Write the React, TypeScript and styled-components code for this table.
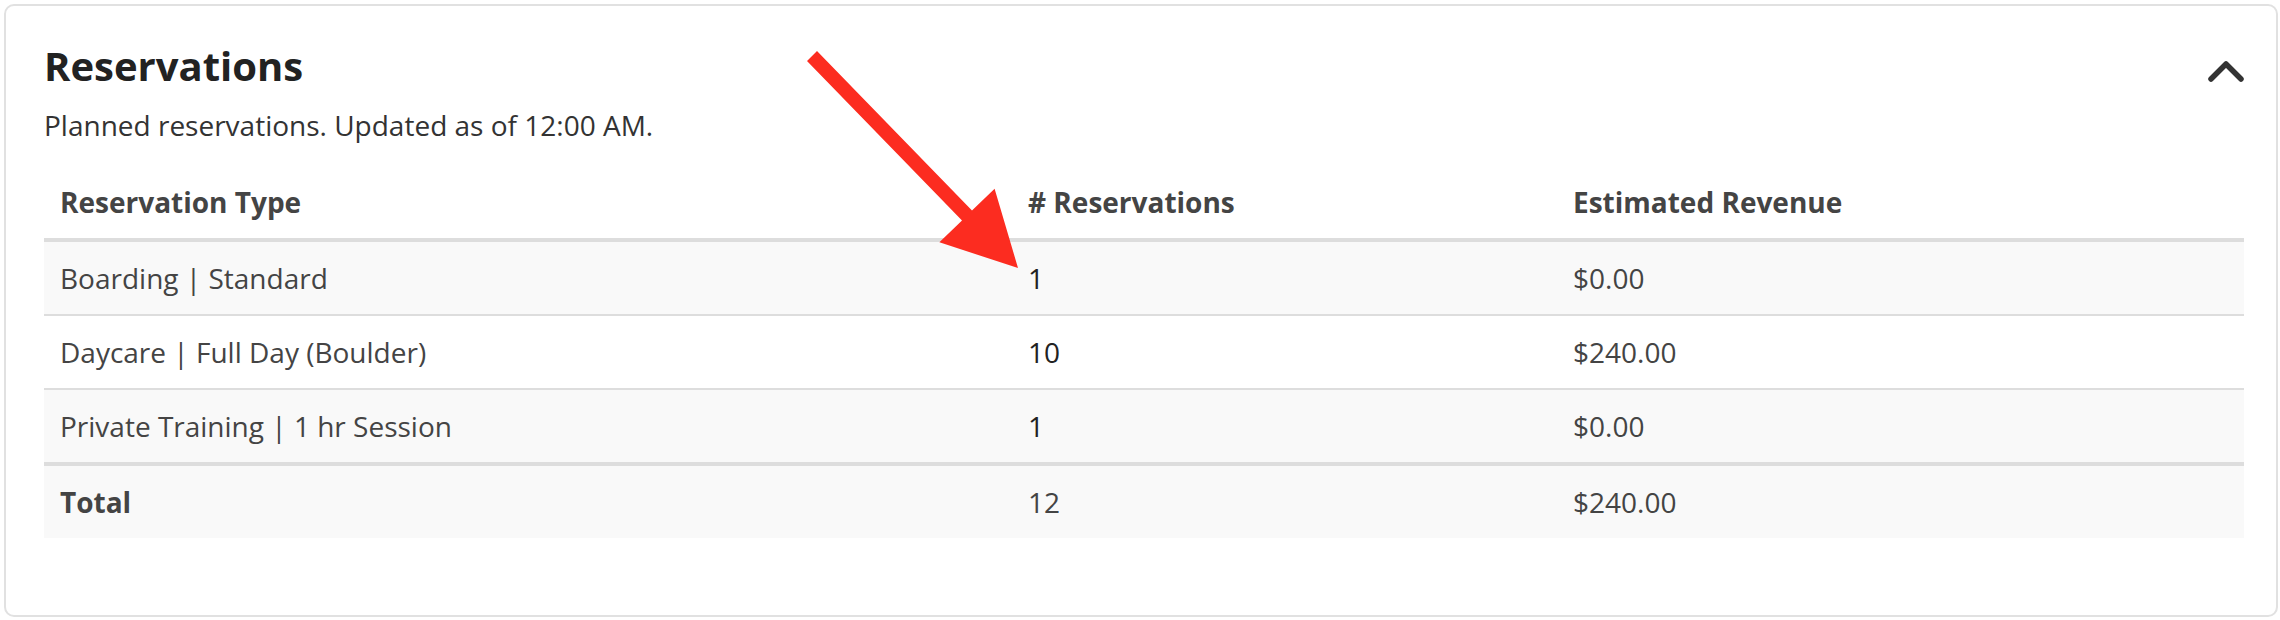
import React from "react";
import styled, { createGlobalStyle } from "styled-components";

const GlobalStyle = createGlobalStyle`
  html, body {
    margin: 0;
    padding: 0;
    background: #ffffff;
    font-family: "Open Sans", "Noto Sans", Arial, sans-serif;
  }
  * { box-sizing: border-box; }
`;

const Page = styled.div`
  position: relative;
  padding: 4px 2px 0 4px;
  width: 2280px;
  height: 620px;
`;

const Card = styled.section`
  border: 2px solid #e1e1e1;
  border-radius: 10px;
  background: #fff;
  padding: 38px 32px 77px 38px;
`;

const TitleRow = styled.div`
  display: flex;
  justify-content: space-between;
  align-items: flex-start;
`;

const Title = styled.h2`
  margin: 0;
  font-size: 40px;
  line-height: 44px;
  font-weight: 700;
  color: #222;
`;

const Toggle = styled.button`
  border: 0;
  background: none;
  padding: 0;
  margin-top: 15px;
  width: 36px;
  height: 24px;
  display: flex;
  cursor: pointer;
`;

const Subtitle = styled.p`
  margin: 17px 0 0 0;
  font-size: 28px;
  line-height: 40px;
  color: #333;
`;

const Table = styled.table`
  margin-top: 21px;
  width: 100%;
  table-layout: fixed;
  border-collapse: separate;
  border-spacing: 0;
  font-size: 28px;
  line-height: 40px;
`;

const Th = styled.th<{ $w: number }>`
  width: ${(p) => p.$w}px;
  text-align: left;
  font-weight: 700;
  color: #444;
  padding: 16px;
  border-bottom: 4px solid #dddddd;
  vertical-align: bottom;
`;

const Tr = styled.tr<{ $striped?: boolean; $total?: boolean }>`
  background: ${(p) => (p.$striped || p.$total ? "#f9f9f9" : "#ffffff")};
`;

const Td = styled.td<{ $bold?: boolean; $dark?: boolean; $border: "thin" | "thick" | "none" }>`
  padding: 16px;
  color: ${(p) => (p.$dark ? "#222" : "#444")};
  font-weight: ${(p) => (p.$bold ? 700 : 400)};
  border-bottom: ${(p) =>
    p.$border === "thick" ? "4px solid #dddddd" : p.$border === "thin" ? "2px solid #dddddd" : "0"};
`;

const Annotation = styled.svg`
  position: absolute;
  left: 0;
  top: 0;
  width: 2280px;
  height: 620px;
  pointer-events: none;
`;

const rows = [
  { type: "Boarding | Standard", count: "1", revenue: "$0.00" },
  { type: "Daycare | Full Day (Boulder)", count: "10", revenue: "$240.00" },
  { type: "Private Training | 1 hr Session", count: "1", revenue: "$0.00" },
];

export default function App() {
  return (
    <>
      <GlobalStyle />
      <Page>
        <Card>
          <TitleRow>
            <Title>Reservations</Title>
            <Toggle aria-label="Collapse">
              <svg width="36" height="24" viewBox="0 0 36 24">
                <polyline
                  points="3,20 18,5 33,20"
                  fill="none"
                  stroke="#333"
                  strokeWidth="5.5"
                  strokeLinecap="round"
                  strokeLinejoin="round"
                />
              </svg>
            </Toggle>
          </TitleRow>
          <Subtitle>Planned reservations. Updated as of 12:00 AM.</Subtitle>
          <Table>
            <thead>
              <tr>
                <Th $w={968}>Reservation Type</Th>
                <Th $w={545}># Reservations</Th>
                <Th $w={687}>Estimated Revenue</Th>
              </tr>
            </thead>
            <tbody>
              {rows.map((r, i) => {
                const border = i === rows.length - 1 ? "thick" : "thin";
                return (
                  <Tr key={r.type} $striped={i % 2 === 0}>
                    <Td $border={border}>{r.type}</Td>
                    <Td $border={border} $dark>
                      {r.count}
                    </Td>
                    <Td $border={border}>{r.revenue}</Td>
                  </Tr>
                );
              })}
              <Tr $total>
                <Td $border="none" $bold>
                  Total
                </Td>
                <Td $border="none">12</Td>
                <Td $border="none">$240.00</Td>
              </Tr>
            </tbody>
          </Table>
        </Card>
        <Annotation viewBox="0 0 2280 620">
          <polygon
            points="817,51 972,210.6 994.6,188.7 1018,268 939.4,242.3 962,220.4 807,61"
            fill="#fc2c20"
          />
        </Annotation>
      </Page>
    </>
  );
}
